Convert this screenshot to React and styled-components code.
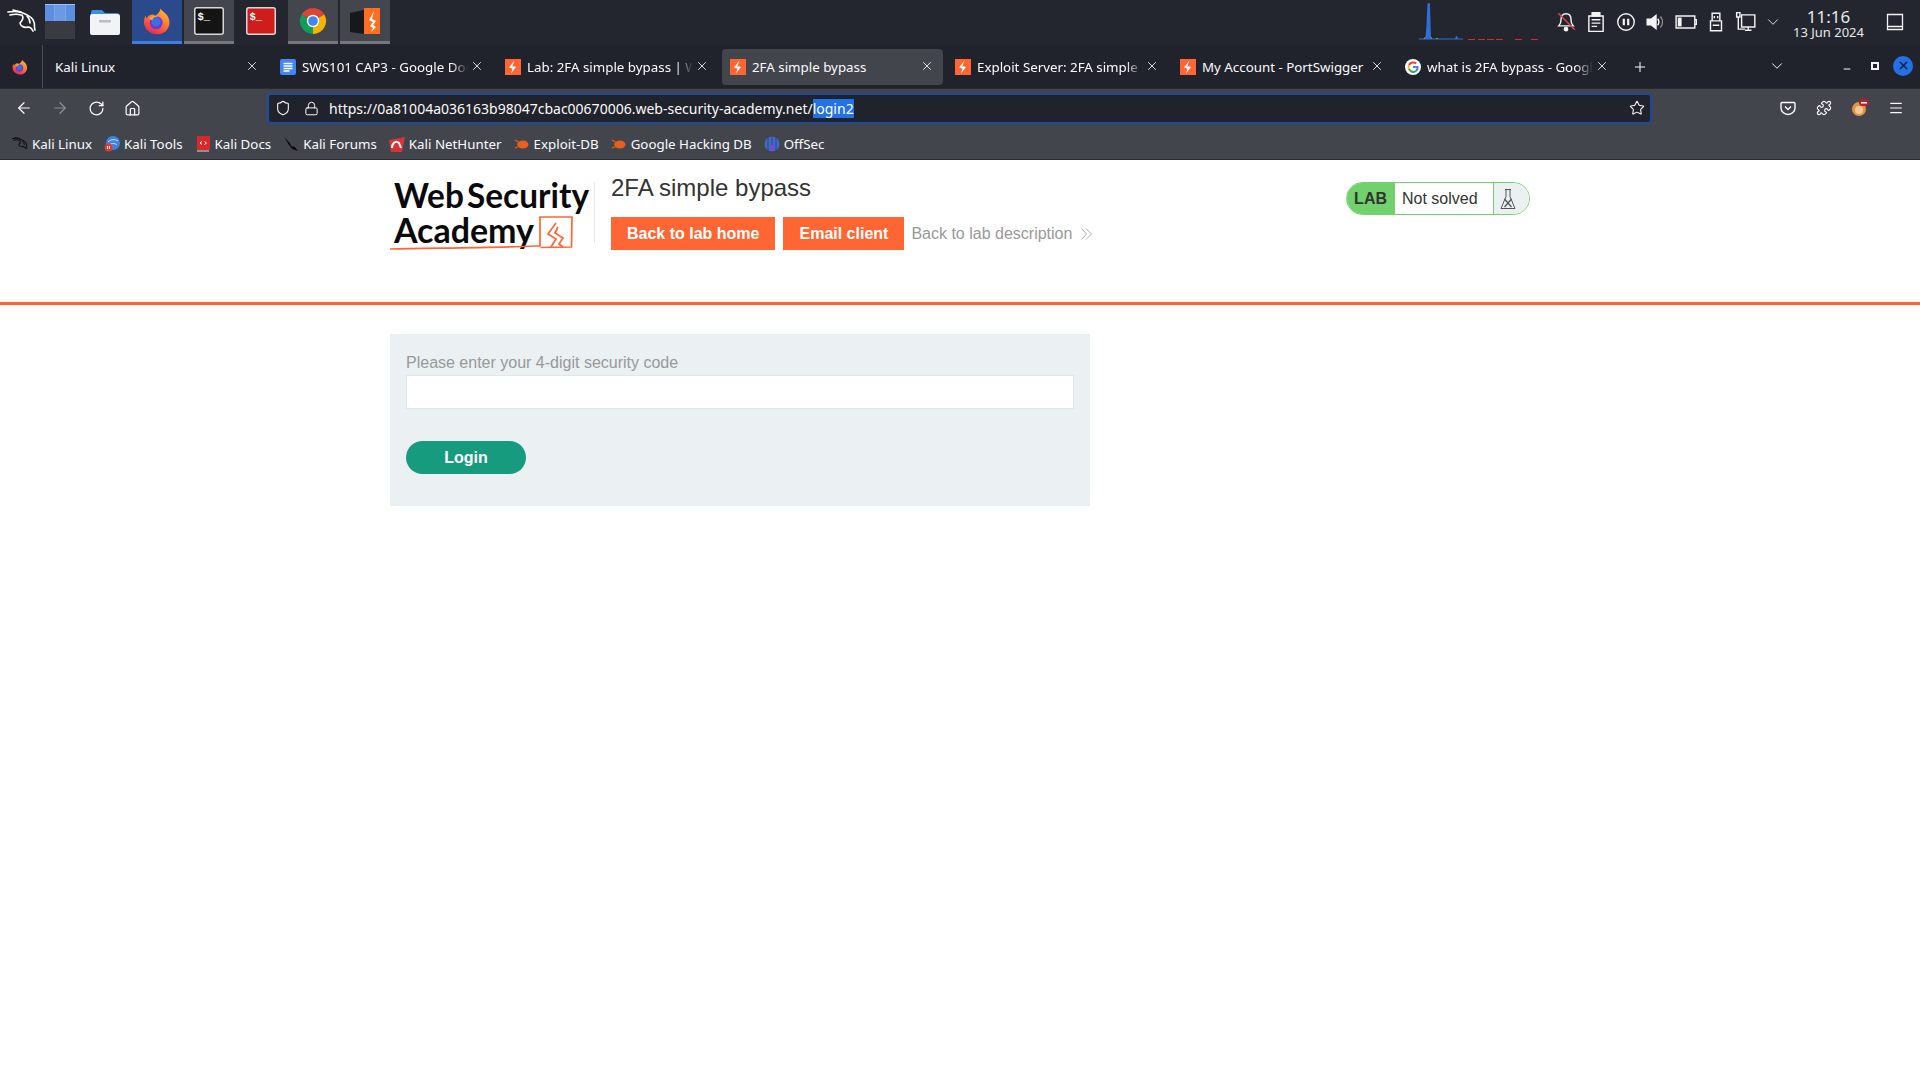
import React from 'react';
import styled, { createGlobalStyle } from 'styled-components';
import { ArrowLeft, ArrowRight, RotateCw, Home, Shield, Lock, Star, Puzzle, Menu, X, Plus, ChevronDown, Minus } from 'lucide-react';

const Global = createGlobalStyle`
  html, body { margin: 0; padding: 0; background: #fff; }
  body { width: 1920px; height: 1080px; overflow: hidden; font-family: "Noto Sans", sans-serif; }
  * { box-sizing: border-box; }
`;

/* ---------- desktop taskbar ---------- */
const Taskbar = styled.div`
  height: 45px; background: #23262e; display: flex; align-items: flex-start; color: #eef0f2;
`;
const TaskItem = styled.div`
  width: ${p => p.$w}px; height: 44px; margin-left: ${p => p.$ml || 0}px;
  display: flex; align-items: center; justify-content: center; padding-top: 1px;
  background: ${p => p.$active ? '#2a4a8c' : p.$open ? '#44464d' : 'transparent'};
  border-bottom: 3px solid ${p => p.$active ? '#3d7fe0' : p.$open ? '#75777c' : 'transparent'};
`;
const Pager = styled.div`
  width: 30px; height: 35px; display: grid; grid-template-rows: 1fr 1fr;
`;
const PagerTop = styled.div`
  display: grid; grid-template-columns: 1fr 1fr 1fr; gap: 1px; background: #7aa6ec; border-top: 1px solid #9cc0f5;
  & > span { background: #5d8fe0; }
  & > span:nth-child(2) { background: #6b99e4; }
`;
const PagerBottom = styled.div`background: #393b43;`;
const Tray = styled.div`margin-left: auto; display: flex; align-items: center; height: 44px; padding-right: 10px;`;
const Spark = styled.div`width: 132px; height: 44px;`;
const TraySlot = styled.div`width: 30px; height: 44px; display: flex; align-items: center; justify-content: center;`;
const ChevronWrap = styled.div`display: flex; margin-right: 5px;`;
const Clock = styled.div`
  width: 76px; text-align: center; display: flex; flex-direction: column; align-items: center;
  color: #e6e8ea; line-height: 1; margin-right: 13.5px; padding-top: 2px;
`;
const Time = styled.div`font-size: 17px; line-height: 17px;`;
const DateText = styled.div`font-size: 13px; line-height: 14px; white-space: nowrap;`;
const DesktopSlot = styled.div`width: 30px; height: 44px; display: flex; align-items: center; justify-content: center;`;

/* ---------- browser tabs ---------- */
const TabBar = styled.div`
  height: 43px; background: #20232b; display: flex; align-items: center;
  color: #fbfbfe; font-size: 13.333px;
`;
const FoxSlot = styled.div`
  width: 43px; height: 43px; display: flex; align-items: center; justify-content: center;
  border-right: 1px solid #4a4c53; padding-right: 2px;
`;
const Tab = styled.div`
  width: 221px; height: 36px; margin-left: 4px; padding: 0 8px; border-radius: 4px; flex: none;
  display: flex; align-items: center; gap: 6px;
  background: ${p => p.$active ? '#42454c' : 'transparent'};
`;
const TabTitle = styled.div`
  flex: 1; min-width: 0; white-space: nowrap; overflow: hidden; padding-top: 1px;
  ${p => p.$fade ? `-webkit-mask-image: linear-gradient(90deg, #000 90%, transparent); mask-image: linear-gradient(90deg, #000 90%, transparent);` : ''}
`;
const TabClose = styled.div`
  width: 16px; height: 16px; margin-top: -2px; margin-left: -5px;
  display: flex; align-items: center; justify-content: center; flex: none;
`;
const NewTab = styled.div`width: 20px; margin-left: 12px; display: flex; justify-content: center;`;
const ListAll = styled.div`margin-left: 117px; width: 20px; display: flex; justify-content: center; margin-top: -2px;`;
const WinButtons = styled.div`
  margin-left: auto; display: flex; align-items: center; gap: 8px; padding-right: 7px; margin-top: -2px;
`;
const WinBtn = styled.div`
  width: 20px; height: 20px; border-radius: 50%; display: flex; align-items: center; justify-content: center;
  background: ${p => p.$close ? '#2470e8' : 'transparent'};
`;

/* ---------- toolbar + url ---------- */
const Toolbar = styled.div`
  height: 42px; background: #42454c; display: flex; align-items: center; color: #fbfbfe; border-top: 1px solid #2a2c33; padding-bottom: 3px;
`;
const NavButtons = styled.div`
  display: flex; align-items: center; width: 267px; padding-left: 14px; gap: 16px;
`;
const NavIcon = styled.div`width: 20px; display: flex; justify-content: center; opacity: ${p => p.$dim ? .4 : 1};`;
const UrlBar = styled.div`
  width: 1385px; height: 31px; background: #20232b; border: 2px solid #1f4a9c; border-radius: 4px;
  display: flex; align-items: center; padding: 0 5px 0 6px; font-size: 14px; color: #fbfbfe;
`;
const UrlIcon = styled.div`width: 16px; margin-right: ${p => p.$mr}px; display: flex; justify-content: center;`;
const UrlText = styled.div`flex: 1; white-space: nowrap;`;
const Selection = styled.span`background: #2172e5; color: #fff;`;
const RightTools = styled.div`display: flex; align-items: center; margin-left: 126px; gap: 16px;`;
const ToolIcon = styled.div`width: 20px; display: flex; justify-content: center;`;

/* ---------- bookmarks ---------- */
const Bookmarks = styled.div`
  height: 30px; background: #42454c; border-bottom: 1px solid #2a2c33; display: flex; align-items: center;
  padding: 0 0 2px 12px; gap: 12px; color: #fbfbfe; font-size: 13.333px;
`;
const Bookmark = styled.div`display: flex; align-items: center; gap: 4px; white-space: nowrap;`;

/* ---------- page ---------- */
const Header = styled.header`
  height: 145px; border-bottom: 3px solid #ff6633; display: flex; justify-content: center; font-family: "Liberation Sans", Arial, sans-serif;
`;
const HeaderInner = styled.div`width: 1140px; display: flex; align-items: flex-start; padding-top: 13px;`;
const LogoWrap = styled.div`width: 205px; flex: none; margin-right: 16px; border-right: 1px solid #e6e6e6; margin-top: 9px; height: 61px;`;
const LogoSvg = styled.svg`display: block; margin-top: -5px;`;
const Title = styled.div`flex: 1;`;
const H1 = styled.h1`
  margin: 0; font-size: 24px; font-weight: 400; color: #333332; line-height: 30px;
`;
const ActionRow = styled.div`display: flex; align-items: center; margin-top: 14px;`;
const OrangeButton = styled.a`
  height: 33px; padding: 0 16px; background: #ff6633; color: #fff; font-weight: 700; font-size: 16px;
  display: flex; align-items: center; margin-right: 8px;
`;
const BackLink = styled.a`
  color: #999; font-size: 16px; display: flex; align-items: center; gap: 9px; margin-left: -1px;
`;
const Badge = styled.div`
  width: 184px; height: 33px; margin-top: 9px; border: 1px solid #70d16d; border-radius: 25px; display: flex; overflow: hidden; font-size: 16px; color: #333332;
`;
const BadgeLab = styled.div`
  width: 48px; background: #70d16d; font-weight: 700; display: flex; align-items: center; justify-content: flex-end; padding-right: 8px; padding-top: 1px;
`;
const BadgeState = styled.div`flex: 1; background: #fff; display: flex; align-items: center; padding-left: 7px;`;
const BadgeIcon = styled.div`
  width: 36px; background: #ebf0f2; border-left: 1px solid #70d16d; display: flex; align-items: center; padding-left: 6px;
`;
const Main = styled.main`
  display: flex; justify-content: center; font-family: "Liberation Sans", Arial, sans-serif;
`;
const MainInner = styled.div`width: 1140px; padding-top: 29px;`;
const Panel = styled.form`
  width: 700px; height: 172px; background: #ebf0f2; padding: 20px 16px 0; display: flex; flex-direction: column; margin: 0;
`;
const Label = styled.label`color: #999; font-size: 16px; line-height: 18px; margin-bottom: 3px;`;
const Input = styled.input`
  height: 34px; width: 668px; border: 1px solid #e6e6e6; background: #fff; outline: none; padding: 0 8px; font-size: 16px;
`;
const Login = styled.button`
  width: 120px; height: 33px; margin-top: 32px; border: 0; border-radius: 25px; background: #179b7f; color: #fff;
  font: 700 16px "Liberation Sans", Arial, sans-serif; padding: 0;
`;

/* ---------- drawings ---------- */
const Firefox = ({ s = 16 }) => (
  <svg width={s} height={s} viewBox="0 0 32 32">
    <defs>
      <linearGradient id={`ffa${s}`} x1="0.7" y1="0" x2="0.2" y2="1">
        <stop offset="0" stopColor="#ffbd2e" /><stop offset=".5" stopColor="#ff7139" /><stop offset="1" stopColor="#e3224f" />
      </linearGradient>
    </defs>
    <path d="M20 1c1 4 6 5 8 9 3 5 3 11 0 15-3 5-8 6-12 6C8 31 1 25 1 17c0-3 1-5 2-7l1 3c1-2 3-4 5-4 2-1 4 0 5 1 3-2 7-6 6-10z" fill={`url(#ffa${s})`} />
    <circle cx="15" cy="18" r="7.5" fill="#6a3fd0" />
    <circle cx="15" cy="17" r="5" fill="#3a6fe0" />
    <path d="M7 13c3-3 7-4 10-2-3 0-6 1-6 4-2 0-3-1-4-2z" fill="#ffa436" />
  </svg>
);
const TermIcon = ({ bg }) => (
  <svg width="30" height="28" viewBox="0 0 30 28">
    <rect x=".75" y=".75" width="28.5" height="26.5" rx="2" fill={bg} stroke="#d8d8d8" strokeWidth="1.5" />
    <text x="3.5" y="13" fontFamily="Liberation Mono, monospace" fontWeight="700" fontSize="10.5" fill="#fff">$_</text>
  </svg>
);
const Files = () => (
  <svg width="30" height="28" viewBox="0 0 30 28">
    <path d="M1 5a2 2 0 0 1 2-2h9l3 3h12a2 2 0 0 1 2 2v3H1z" fill="#3d8de8" />
    <rect x="0" y="7" width="30" height="21" rx="2" fill="#f2f3f4" />
    <rect x="9" y="13" width="12" height="2.5" rx="1" fill="#b9bcc0" />
  </svg>
);
const Chrome = () => (
  <svg width="28" height="28" viewBox="0 0 28 28">
    <path d="M14 14L2.7 7.5A13 13 0 0 1 25.3 7.5z" fill="#db4437" />
    <path d="M14 14L25.3 7.5A13 13 0 0 1 14 27z" fill="#f4b400" />
    <path d="M14 14L14 27A13 13 0 0 1 2.7 7.5z" fill="#0f9d58" />
    <circle cx="14" cy="14" r="6.2" fill="#fff" /><circle cx="14" cy="14" r="4.8" fill="#4285f4" />
  </svg>
);
const BurpApp = () => (
  <svg width="30" height="27" viewBox="0 0 30 27">
    <path d="M0 5l14-3v24L0 24z" fill="#17181b" /><path d="M14 0h16v26H14z" fill="#ff6f1f" />
    <path d="M24 3l-5 9 4 2-3 4 3 2-2 4 5-5-3-2 3-4-4-2z" fill="#fff" />
  </svg>
);
const KaliDragon = ({ s = 30, c = '#fff', w = 1.6 }) => (
  <svg width={s} height={s * .77} viewBox="0 0 30 23" fill="none" stroke={c} strokeWidth={w} strokeLinecap="round">
    <path d="M1 3c6-1 11-1 15 1 5 2 10 5 11 9 1 3 0 6 1 8" />
    <path d="M3 6c4-1 8-1 11 0M6 1l8 2" />
    <path d="M15 6c2 3 0 6-2 8 0 3 4 5 8 4 3 0 4 2 5 4" />
    <path d="M20 7c2 2 3 4 3 7" />
  </svg>
);
const Burp = () => (
  <svg width="16" height="16" viewBox="0 0 16 16">
    <rect width="16" height="16" fill="#ff6633" />
    <path d="M9.500 1.500L4 8.500l3.500 1-1.500 5 5-6.500-3.500-1.300z" fill="#fff" />
    <path d="M9 6l-1.500 2" stroke="#ff6633" strokeWidth=".8" />
  </svg>
);
const Docs = () => (
  <svg width="16" height="16" viewBox="0 0 16 16">
    <rect width="16" height="16" rx="2" fill="#4285f4" />
    <path d="M3.500 4.500h9M3.500 7h9M3.500 9.500h9M3.500 12h6" stroke="#fff" strokeWidth="1.300" />
  </svg>
);
const GoogleG = () => (
  <svg width="16" height="16" viewBox="0 0 16 16">
    <circle cx="8" cy="8" r="8" fill="#fff" />
    <path d="M4 6A4.600 4.600 0 0 1 11.200 4.600" stroke="#ea4335" strokeWidth="2" fill="none" />
    <path d="M4 6a4.600 4.600 0 0 0 0 4" stroke="#fbbc05" strokeWidth="2" fill="none" />
    <path d="M4 10a4.600 4.600 0 0 0 7 2" stroke="#34a853" strokeWidth="2" fill="none" />
    <path d="M11 12a4.600 4.600 0 0 0 1.600-4H8" stroke="#4285f4" strokeWidth="2" fill="none" />
  </svg>
);
const Graph = () => (
  <svg width="132" height="44" viewBox="0 0 132 44">
    <path d="M0 39h44" stroke="#2f6fd8" strokeWidth="1" />
    <path d="M5 39l1.500-2 2 2M11 39L12 37l1 2M17 39l1-1 1 1" stroke="#c98a2b" strokeWidth="1" fill="none" />
    <path d="M7 39l1-10 1.200-25 1 0 1 34 1 1" stroke="#2f6fd8" strokeWidth="1.500" fill="#2f6fd8" />
    <path d="M36 39l1-3h1l1 3z" fill="#2f6fd8" />
    <path d="M49 39.500h7M59 39.500h7M68 39.500h7M77 39.500h7M96 39.500h7M112 39.500h7" stroke="#d52a2a" strokeWidth="1" />
  </svg>
);
const Ico = ({ children, w = 22, h = 22, vb = '0 0 20 20' }) => (
  <svg width={w} height={h} viewBox={vb} fill="none" stroke="#f2f3f4" strokeWidth="1.300">{children}</svg>
);
const SmallBug = () => (
  <svg width="16" height="14" viewBox="0 0 16 14">
    <ellipse cx="9" cy="7.500" rx="5.500" ry="4" fill="#e8601c" />
    <path d="M1 3l5 3M1 11l5-2M3 7h4" stroke="#e8601c" strokeWidth="1.200" />
  </svg>
);
const Logo = () => (
  <LogoSvg width="204" height="84" viewBox="0 0 204 84">
    <text x="4" y="31" textLength="195" lengthAdjust="spacingAndGlyphs" fontFamily="Lato, sans-serif" fontWeight="700" fontSize="34" wordSpacing="-5" fill="#0a0a0a">Web Security</text>
    <text x="4" y="66" textLength="140" lengthAdjust="spacingAndGlyphs" fontFamily="Lato, sans-serif" fontWeight="700" fontSize="34" fill="#0a0a0a">Academy</text>
    <path d="M0 72c40-1 100-1 145-3h5V40h32l-.5 30-31 .5" fill="none" stroke="#ff6633" strokeWidth="1.700" />
    <path d="M166 46l-8 11 8 5-5 8M168 50l-3 6 8 5-4 6 4 3" fill="none" stroke="#ff6633" strokeWidth="1.700" />
  </LogoSvg>
);
const Chevrons = () => (
  <svg width="11" height="12" viewBox="0 0 11 12" fill="none" stroke="#aaa" strokeWidth="1">
    <path d="M.5.500l5 5.500-5 5.500M5 .5l5.500 5.500L5 11.500" />
  </svg>
);
const Flask = () => (
  <svg width="16" height="22" viewBox="0 0 16 22" fill="none" stroke="#555" strokeWidth="1">
    <path d="M5 1.500h6M6 1.500v7L1 20.500h14L10 8.500v-7" />
    <path d="M4.500 11l7 8M11.500 11l-7 8" strokeWidth="1.300" />
  </svg>
);

const close = <X size={14} strokeWidth={1.500} color="#f4f4f6" />;

const tabs = [
  { title: 'Kali Linux' },
  { icon: <Docs />, title: 'SWS101 CAP3 - Google Docs', fade: true },
  { icon: <Burp />, title: 'Lab: 2FA simple bypass | Web Security', fade: true },
  { icon: <Burp />, title: '2FA simple bypass', active: true },
  { icon: <Burp />, title: 'Exploit Server: 2FA simple bypass', fade: true },
  { icon: <Burp />, title: 'My Account - PortSwigger' },
  { icon: <GoogleG />, title: 'what is 2FA bypass - Google Search', fade: true },
];

const marks = [
  [<KaliDragon s={16} c="#111" w={2} />, 'Kali Linux'],
  [<svg width="16" height="16" viewBox="0 0 16 16"><circle cx="9" cy="7" r="7" fill="#3f83e8" /><path d="M4 6c3-3 7-3 10-1M5 9c3-2 6-2 8 0" stroke="#cfe2ff" fill="none" /><circle cx="4.500" cy="11.500" r="4" fill="#e03a34" /><path d="M3.500 10v3M5.500 10v3" stroke="#fff" /></svg>, 'Kali Tools'],
  [<svg width="16" height="16" viewBox="0 0 16 16"><rect x="2" width="13" height="14" fill="#d9282a" /><rect x="2" y="14" width="12" height="2" fill="#8c8f96" /><path d="M5 7l2-1.500M5 7l2 1.500M11.500 7l-2-1.500M11.500 7l-2 1.500" stroke="#fff" /></svg>, 'Kali Docs'],
  [<svg width="16" height="16" viewBox="0 0 16 16"><path d="M1 1l6 6 1 3 4 1 3 4-6-2-3-4z" fill="#0c0c0c" /></svg>, 'Kali Forums'],
  [<svg width="16" height="16" viewBox="0 0 16 16"><path d="M0 4l16-3-3 15H2z" fill="#d9343a" /><path d="M3 12c0-5 4-8 7-5l2 5" stroke="#fff" strokeWidth="2" fill="none" /></svg>, 'Kali NetHunter'],
  [<SmallBug />, 'Exploit-DB'],
  [<SmallBug />, 'Google Hacking DB'],
  [<svg width="16" height="16" viewBox="0 0 16 16"><circle cx="8" cy="8" r="7.500" fill="#3b6ad6" /><path d="M4 1v14M8 0v16M12 1v14" stroke="#42454c" strokeWidth="1" /><path d="M8 9v6" stroke="#8a3fd6" strokeWidth="3" /></svg>, 'OffSec'],
];

export default function App() {
  return (
    <>
      <Global />
      <Taskbar>
        <TaskItem $w={43}><KaliDragon s={30} /></TaskItem>
        <TaskItem $w={34}><Pager><PagerTop><span /><span /><span /></PagerTop><PagerBottom /></Pager></TaskItem>
        <TaskItem $w={55}><Files /></TaskItem>
        <TaskItem $w={50} $active><Firefox s={28} /></TaskItem>
        <TaskItem $w={50} $ml={2} $open><TermIcon bg="#141414" /></TaskItem>
        <TaskItem $w={54}><TermIcon bg="#cf1d1d" /></TaskItem>
        <TaskItem $w={50} $open><Chrome /></TaskItem>
        <TaskItem $w={50} $ml={2} $open><BurpApp /></TaskItem>
        <Tray>
          <Spark><Graph /></Spark>
          <TraySlot><Ico><path d="M10 2.500c3 0 4.500 2 4.500 5 0 4 2 6 2 6h-13s2-2 2-6c0-3 1.500-5 4.500-5z" /><circle cx="10" cy="16.500" r="1.500" fill="#f2f3f4" /><path d="M3 2l15 15" stroke="#d84a4a" /></Ico></TraySlot>
          <TraySlot><Ico><path d="M3.500 4.500h13v14h-13z" /><path d="M6.500 1.500h7v3h-7z" fill="#f2f3f4" /><path d="M6 8h8M6 11h8M6 14h5" /></Ico></TraySlot>
          <TraySlot><Ico><circle cx="10" cy="10" r="7.500" /><path d="M8 7v6M12 7v6" strokeWidth="2" /></Ico></TraySlot>
          <TraySlot><Ico><path d="M2 7.500h3.500L10 4v12l-4.500-3.500H2z" fill="#f2f3f4" /><path d="M11.500 7c1.500 2 1.500 4 0 6" /><path d="M14 5c2.500 3 2.500 7 0 10" opacity=".5" /></Ico></TraySlot>
          <TraySlot><Ico><path d="M1 4.500h17v11H1z" /><path d="M18 8h1.500v4H18" /><path d="M2.500 6h3.500v8H2.500z" fill="#f2f3f4" stroke="none" /></Ico></TraySlot>
          <TraySlot><Ico><path d="M6.500 2h7v7h-7zM5 9h10v9H5z" /><path d="M8.500 4.500v2M11.500 4.500v2M7 13h6" /></Ico></TraySlot>
          <TraySlot><Ico><path d="M6 3.500h12v11H6z" /><path d="M9 17.500h6M12 14.500v3" /><path d="M1.500 1.500h3v4h-3zM3 5.500v11h6" /></Ico></TraySlot>
          <TraySlot><ChevronWrap><ChevronDown size={18} strokeWidth={1.200} color="#eef0f2" /></ChevronWrap></TraySlot>
          <Clock><Time>11:16</Time><DateText>13 Jun 2024</DateText></Clock>
          <DesktopSlot><Ico w={18} h={18} vb="0 0 18 18"><path d="M1.500 1.500h15v15h-15zM1.500 13.500h15" /></Ico></DesktopSlot>
        </Tray>
      </Taskbar>

      <TabBar>
        <FoxSlot><Firefox s={16} /></FoxSlot>
        {tabs.map(t => (
          <Tab key={t.title} $active={t.active}>
            {t.icon}
            <TabTitle $fade={t.fade}>{t.title}</TabTitle>
            <TabClose>{close}</TabClose>
          </Tab>
        ))}
        <NewTab><Plus size={16} strokeWidth={1.500} /></NewTab>
        <ListAll><ChevronDown size={18} strokeWidth={1.300} /></ListAll>
        <WinButtons>
          <WinBtn><Minus size={10} strokeWidth={2.500} style={{ marginTop: 6 }} /></WinBtn>
          <WinBtn><svg width="8" height="8" viewBox="0 0 8 8"><rect x="1" y="1" width="6" height="6" fill="none" stroke="#f4f4f6" strokeWidth="2" /></svg></WinBtn>
          <WinBtn $close><X size={13} strokeWidth={3} color="#16243f" /></WinBtn>
        </WinButtons>
      </TabBar>

      <Toolbar>
        <NavButtons>
          <NavIcon><ArrowLeft size={18} strokeWidth={1.600} /></NavIcon>
          <NavIcon $dim><ArrowRight size={18} strokeWidth={1.600} /></NavIcon>
          <NavIcon><RotateCw size={17} strokeWidth={1.800} /></NavIcon>
          <NavIcon><Home size={17} strokeWidth={1.700} /></NavIcon>
        </NavButtons>
        <UrlBar>
          <UrlIcon $mr={12}><Shield size={16} strokeWidth={1.600} /></UrlIcon>
          <UrlIcon $mr={10}><Lock size={15} strokeWidth={1.600} /></UrlIcon>
          <UrlText>https://0a81004a036163b98047cbac00670006.web-security-academy.net/<Selection>login2</Selection></UrlText>
          <Star size={16} strokeWidth={1.600} />
        </UrlBar>
        <RightTools>
          <ToolIcon><svg width="16" height="16" viewBox="0 0 16 16" fill="none" stroke="#fbfbfe" strokeWidth="1.400"><path d="M2 2.500h12a1 1 0 0 1 1 1V8a7 6.500 0 0 1-14 0V3.500a1 1 0 0 1 1-1z" /><path d="M5 6.500L8 9.500l3-3" /></svg></ToolIcon>
          <ToolIcon><Puzzle size={16} strokeWidth={1.700} /></ToolIcon>
          <ToolIcon><svg width="18" height="18" viewBox="0 0 18 18"><circle cx="8" cy="10" r="7" fill="#e0944a" /><circle cx="8" cy="11" r="4" fill="#f4c99a" /><rect x="8" y="0" width="10" height="7" rx="3.500" fill="#b8222d" /><rect x="10" y="3" width="6" height="1.500" fill="#fff" /></svg></ToolIcon>
          <ToolIcon><Menu size={16} strokeWidth={1.700} /></ToolIcon>
        </RightTools>
      </Toolbar>

      <Bookmarks>
        {marks.map(([icon, label]) => <Bookmark key={label}>{icon}<span>{label}</span></Bookmark>)}
      </Bookmarks>

      <Header>
        <HeaderInner>
          <LogoWrap><Logo /></LogoWrap>
          <Title>
            <H1>2FA simple bypass</H1>
            <ActionRow>
              <OrangeButton>Back to lab home</OrangeButton>
              <OrangeButton>Email client</OrangeButton>
              <BackLink>Back to lab description <Chevrons /></BackLink>
            </ActionRow>
          </Title>
          <Badge>
            <BadgeLab>LAB</BadgeLab>
            <BadgeState>Not solved</BadgeState>
            <BadgeIcon><Flask /></BadgeIcon>
          </Badge>
        </HeaderInner>
      </Header>

      <Main>
        <MainInner>
          <Panel onSubmit={e => e.preventDefault()}>
            <Label>Please enter your 4-digit security code</Label>
            <Input />
            <Login>Login</Login>
          </Panel>
        </MainInner>
      </Main>
    </>
  );
}
